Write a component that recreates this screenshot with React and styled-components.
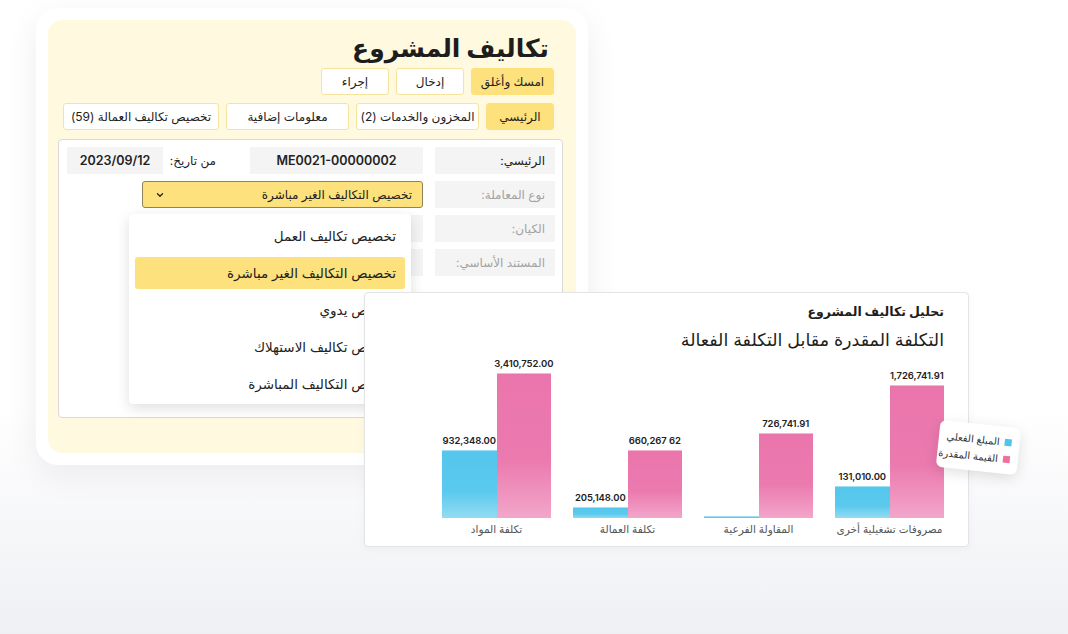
import React from "react";
import styled, { createGlobalStyle } from "styled-components";

const GlobalStyle = createGlobalStyle`
  * { box-sizing: border-box; }
  body {
    margin: 0;
    font-family: "Inter", "DejaVu Sans", sans-serif;
    color: #222;
  }
`;

const Canvas = styled.div`
  position: relative;
  width: 1068px;
  height: 634px;
  overflow: hidden;
  background: linear-gradient(180deg, #ffffff 0%, #ffffff 64%, #eff0f4 100%);
`;

const Window = styled.div`
  position: absolute;
  left: ${(p) => p.$x}px;
  top: ${(p) => p.$y}px;
  z-index: ${(p) => p.$z};
`;

/* ---------- ERP form window ---------- */

const ErpCard = styled.div`
  width: 552px;
  height: 457px;
  padding: 12px;
  background: #fff;
  border-radius: 22px;
  box-shadow: 0 10px 34px rgba(30, 35, 60, 0.07);
`;

const YellowPanel = styled.div`
  direction: rtl;
  height: 100%;
  padding: 10px 13px 0 10px;
  background: #fffadf;
  border-radius: 14px;
  display: flex;
  flex-direction: column;
`;

const Header = styled.div`
  padding-right: 9px;
  display: flex;
  flex-direction: column;
  gap: 8px;
`;

const Title = styled.h1`
  margin: 0 5px -6px 0;
  font-size: 25px;
  line-height: 36px;
  font-weight: 700;
  color: #1d1d1d;
`;

const ButtonRow = styled.div`
  display: flex;
  gap: 7px;
`;

const Chip = styled.div`
  height: 27px;
  width: ${(p) => p.$w}px;
  display: flex;
  align-items: center;
  justify-content: center;
  font-size: 12px;
  color: #222;
  background: ${(p) => (p.$active ? "#fde17c" : "#ffffff")};
  border: 1px solid ${(p) => (p.$active ? "#fde17c" : "#f6e39c")};
  border-radius: 3px;
  white-space: nowrap;
`;

const FormPanel = styled.div`
  margin-top: 9px;
  height: 279px;
  padding: 7px 7px 0 8px;
  background: #fff;
  border: 1px solid #d9d9d9;
  border-radius: 4px;
  display: flex;
  flex-direction: column;
  gap: 7px;
`;

const Row = styled.div`
  display: flex;
  align-items: center;
  height: 27px;
  gap: 12px;
`;

const LabelBox = styled.div`
  width: 120px;
  height: 27px;
  flex: none;
  display: flex;
  align-items: center;
  padding-right: 10px;
  font-size: 12px;
  background: #f4f4f4;
  color: ${(p) => (p.$muted ? "#a3a3a3" : "#222")};
`;

const ValueBox = styled.div`
  width: ${(p) => p.$w}px;
  height: 27px;
  flex: none;
  display: flex;
  align-items: center;
  justify-content: center;
  background: #f4f4f4;
  font-size: 12.5px;
  font-weight: 600;
  color: #222;
  direction: ltr;
`;

const InlineLabel = styled.div`
  width: 89px;
  margin-left: -12px;
  padding-right: 22px;
  font-size: 12px;
  color: #222;
`;

const SelectWrap = styled.div`
  position: relative;
  width: 281px;
  flex: none;
`;

const Select = styled.div`
  height: 27px;
  display: flex;
  align-items: center;
  justify-content: space-between;
  padding: 0 10px 0 12px;
  background: #fde17c;
  border: 1px solid #8f8458;
  border-radius: 3px;
  font-size: 12px;
  color: #222;
`;

const Menu = styled.div`
  position: absolute;
  top: calc(100% + 6px);
  right: 12px;
  width: 282px;
  height: 190px;
  padding: 6px 6px 4px;
  background: #fff;
  border-radius: 4px;
  box-shadow: 0 4px 14px rgba(0, 0, 0, 0.13);
  display: flex;
  flex-direction: column;
  gap: 5px;
`;

const MenuItem = styled.div`
  height: 32px;
  flex: none;
  display: flex;
  align-items: center;
  padding-right: 9px;
  font-size: 13.5px;
  color: #222;
  white-space: nowrap;
  border-radius: 3px;
  background: ${(p) => (p.$active ? "#fde17c" : "transparent")};
`;

/* ---------- Chart window ---------- */

const ChartCard = styled.div`
  position: relative;
  direction: rtl;
  width: 605px;
  height: 255px;
  padding: 10px 24px 0 0;
  background: #fff;
  border: 1px solid #e3e4e8;
  border-radius: 4px;
  box-shadow: 0 2px 8px rgba(30, 35, 60, 0.04);
`;

const ChartTitle = styled.div`
  font-size: 12.5px;
  font-weight: 700;
  line-height: 18px;
  color: #1d1d1d;
`;

const ChartSubtitle = styled.div`
  margin-top: 6px;
  font-size: 17.5px;
  line-height: 26px;
  color: #1d1d1d;
`;

const Groups = styled.div`
  display: flex;
  gap: 22px;
  margin-top: 2px;
`;

const Group = styled.div`
  width: 109px;
  display: flex;
  flex-direction: column;
  align-items: center;
`;

const Bars = styled.div`
  direction: ltr;
  height: 163px;
  width: 100%;
  display: flex;
  align-items: flex-end;
`;

const BarCol = styled.div`
  width: 54.5px;
  display: flex;
  flex-direction: column;
  align-items: center;
  justify-content: flex-end;
`;

const BarValue = styled.div`
  font-size: 9.5px;
  font-weight: 600;
  letter-spacing: -0.1px;
  color: #222;
  margin-bottom: 4px;
  white-space: nowrap;
`;

const Bar = styled.div`
  width: 100%;
  border-top: 1px solid ${(p) => (p.$kind === "blue" ? "#9fe0f4" : "#f4b4d2")};
  background: ${(p) =>
    p.$kind === "blue"
      ? "linear-gradient(180deg, #55c7ec 0%, #5ac9ed 60%, #93dcf2 100%)"
      : "linear-gradient(180deg, #ea75ac 0%, #eb7aaf 60%, #f2a6ca 100%)"};
`;

const Category = styled.div`
  margin-top: 5px;
  font-size: 10.5px;
  line-height: 14px;
  color: #555;
  white-space: nowrap;
`;

const Legend = styled.div`
  position: absolute;
  left: 573px;
  top: 131px;
  width: 81px;
  height: 47px;
  padding: 0 8px;
  background: #fff;
  border-radius: 6px;
  box-shadow: 0 4px 14px rgba(0, 0, 0, 0.12);
  transform: rotate(6deg);
  display: flex;
  flex-direction: column;
  justify-content: center;
  gap: 5px;
`;

const LegendItem = styled.div`
  display: flex;
  align-items: center;
  gap: 5px;
  font-size: 10px;
  color: #333;
  white-space: nowrap;
  &::before {
    content: "";
    width: 7px;
    height: 7px;
    flex: none;
    background: ${(p) => p.$color};
  }
`;

const groups = [
  { name: "مصروفات تشغيلية أخرى", blue: 32, blueLabel: "131,010.00", pink: 133, pinkLabel: "1,726,741.91" },
  { name: "المقاولة الفرعية", blue: 2, blueLabel: null, pink: 85, pinkLabel: "726,741.91" },
  { name: "تكلفة العمالة", blue: 11, blueLabel: "205,148.00", pink: 68, pinkLabel: "660,267 62" },
  { name: "تكلفة المواد", blue: 68, blueLabel: "932,348.00", pink: 145, pinkLabel: "3,410,752.00" },
];

const menuItems = [
  "تخصيص تكاليف العمل",
  "تخصيص التكاليف الغير مباشرة",
  "تخصيص يدوي",
  "تخصيص تكاليف الاستهلاك",
  "تخصيص التكاليف المباشرة",
];

function Chevron() {
  return (
    <svg width="10" height="10" viewBox="0 0 10 10" fill="none">
      <path d="M2.5 3.8 5 6.2 7.5 3.8" stroke="#222" strokeWidth="1.3" strokeLinecap="round" strokeLinejoin="round" />
    </svg>
  );
}

export default function App() {
  return (
    <Canvas>
      <GlobalStyle />

      <Window $x={36} $y={8} $z={1}>
        <ErpCard>
          <YellowPanel>
            <Header>
              <Title>تكاليف المشروع</Title>
              <ButtonRow>
                <Chip $w={83} $active>امسك وأغلق</Chip>
                <Chip $w={68}>إدخال</Chip>
                <Chip $w={68}>إجراء</Chip>
              </ButtonRow>
              <ButtonRow>
                <Chip $w={68} $active>الرئيسي</Chip>
                <Chip $w={123}>المخزون والخدمات (2)</Chip>
                <Chip $w={123}>معلومات إضافية</Chip>
                <Chip $w={156}>تخصيص تكاليف العمالة (59)</Chip>
              </ButtonRow>
            </Header>

            <FormPanel>
              <Row>
                <LabelBox>الرئيسي:</LabelBox>
                <ValueBox $w={173}>ME0021-00000002</ValueBox>
                <InlineLabel>من تاريخ:</InlineLabel>
                <ValueBox $w={96}>2023/09/12</ValueBox>
              </Row>
              <Row>
                <LabelBox $muted>نوع المعاملة:</LabelBox>
                <SelectWrap>
                  <Select>
                    <span>تخصيص التكاليف الغير مباشرة</span>
                    <Chevron />
                  </Select>
                  <Menu>
                    {menuItems.map((item, i) => (
                      <MenuItem key={item} $active={i === 1}>
                        {item}
                      </MenuItem>
                    ))}
                  </Menu>
                </SelectWrap>
              </Row>
              <Row>
                <LabelBox $muted>الكيان:</LabelBox>
                <ValueBox $w={173} />
              </Row>
              <Row>
                <LabelBox $muted>المستند الأساسي:</LabelBox>
                <ValueBox $w={173} />
              </Row>
            </FormPanel>
          </YellowPanel>
        </ErpCard>
      </Window>

      <Window $x={364} $y={292} $z={2}>
        <ChartCard>
          <ChartTitle>تحليل تكاليف المشروع</ChartTitle>
          <ChartSubtitle>التكلفة المقدرة مقابل التكلفة الفعالة</ChartSubtitle>
          <Groups>
            {groups.map((g) => (
              <Group key={g.name}>
                <Bars>
                  <BarCol>
                    {g.blueLabel && <BarValue>{g.blueLabel}</BarValue>}
                    <Bar $kind="blue" style={{ height: g.blue }} />
                  </BarCol>
                  <BarCol>
                    <BarValue>{g.pinkLabel}</BarValue>
                    <Bar $kind="pink" style={{ height: g.pink }} />
                  </BarCol>
                </Bars>
                <Category>{g.name}</Category>
              </Group>
            ))}
          </Groups>
          <Legend>
            <LegendItem $color="#4fc4ef">المبلغ الفعلي</LegendItem>
            <LegendItem $color="#f0709c">القيمة المقدرة</LegendItem>
          </Legend>
        </ChartCard>
      </Window>
    </Canvas>
  );
}
